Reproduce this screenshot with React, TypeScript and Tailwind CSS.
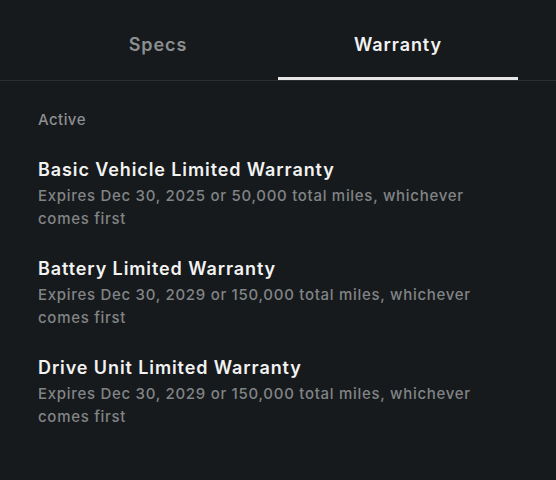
import React from "react";

const items = [
  { title: "Basic Vehicle Limited Warranty", desc: "Expires Dec 30, 2025 or 50,000 total miles, whichever comes first" },
  { title: "Battery Limited Warranty", desc: "Expires Dec 30, 2029 or 150,000 total miles, whichever comes first" },
  { title: "Drive Unit Limited Warranty", desc: "Expires Dec 30, 2029 or 150,000 total miles, whichever comes first" },
];

export default function App() {
  return (
    <div className="w-[556px] h-[480px] bg-[#171a1c] overflow-hidden" style={{ fontFamily: "Inter, 'Noto Sans', sans-serif" }}>
      <div className="relative border-b border-[#2b2e30]">
        <div className="flex px-[38px]">
          <div className="w-[240px] h-[80px] flex items-center justify-center pt-[8px] text-[18px] font-semibold tracking-[0.05em] text-[#8c8f91]">Specs</div>
          <div className="relative w-[240px] h-[80px] flex items-center justify-center pt-[8px] text-[18px] font-semibold tracking-[0.05em] text-[#f2f2f2]">
            Warranty
            <div className="absolute left-0 right-0 bottom-[0px] h-[3px] bg-[#e6e6e6]" />
          </div>
        </div>
      </div>
      <div className="px-[38px] pt-[29px]">
        <div className="text-[15px] font-medium tracking-[0.03em] text-[#8c8f91] leading-[20px]">Active</div>
        <div className="flex flex-col gap-[27px] mt-[28px]">
          {items.map((it) => (
            <div key={it.title} className="pr-[20px]">
              <div className="text-[18px] font-semibold tracking-[0.05em] text-[#f2f2f2] leading-[24px]">{it.title}</div>
              <div className="text-[15px] font-medium tracking-[0.047em] text-[#818486] leading-[23px] mt-[2px]">{it.desc}</div>
            </div>
          ))}
        </div>
      </div>
    </div>
  );
}
